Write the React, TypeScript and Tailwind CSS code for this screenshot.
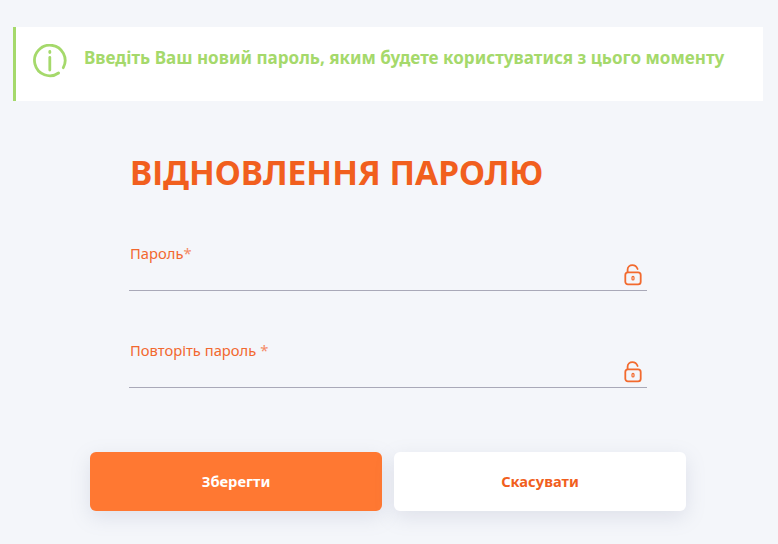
function Lock() {
  return (
    <svg width="18" height="22" viewBox="0 0 18 22" fill="none" stroke="#f26a2e" strokeWidth="1.8" className="absolute right-[5px] bottom-[4px]">
      <rect x="1.3" y="8.3" width="15.4" height="12" rx="2.6" />
      <path d="M3.6 8 V5.8 C3.6 3 5.8 1.2 8.4 1.2 C11 1.2 12.6 2.6 13.6 5" strokeLinecap="round" />
      <rect x="8" y="12.4" width="2" height="3.6" rx="1" strokeWidth="1.2" />
    </svg>
  );
}

function Field({ label, star }: { label: string; star: string }) {
  return (
    <div className="relative w-[518px] h-[48px] border-b border-[#a9a9b8]">
      <div className="pl-px text-[14.75px] leading-[20px] text-[#f2682f]">
        {label}
        <span className="text-[#f58a66]">{star}</span>
      </div>
      <Lock />
    </div>
  );
}

export default function App() {
  return (
    <div className="w-[778px] h-[544px] overflow-hidden bg-[#f4f6fa] pt-[27px] font-['Noto_Sans','Open_Sans',sans-serif]">
      <div className="ml-[13px] flex h-[74px] w-[750px] items-start border-l-[3px] border-[#a5d96b] bg-white pl-[17px]">
        <svg width="34" height="34" viewBox="0 0 34 34" fill="none" stroke="#a5d96b" strokeWidth="2.8" strokeLinecap="round" className="mt-[17px]">
          <path d="M25.6 29 A15.3 15.3 0 1 1 30.3 23.7" />
          <path d="M16.8 13.5 V26" />
          <path d="M16.8 7.5 V8.5" />
        </svg>
        <div className="mt-[19px] ml-[17px] text-[17.1px] leading-[24px] font-bold text-[#a5d96b] whitespace-nowrap">
          Введіть Ваш новий пароль, яким будете користуватися з цього моменту
        </div>
      </div>
      <div className="ml-[129px] mt-[49px] pl-px text-[33.5px] leading-[44px] font-bold text-[#f15f1e] whitespace-nowrap">
        ВІДНОВЛЕННЯ ПАРОЛЮ
      </div>
      <div className="ml-[129px] mt-[49px] flex flex-col gap-[49px]">
        <Field label="Пароль" star="*" />
        <Field label="Повторіть пароль " star="*" />
      </div>
      <div className="ml-[90px] mt-[64px] flex gap-[12px]">
        <button className="flex h-[59px] w-[292px] items-center justify-center rounded-[6px] bg-[#ff7832] text-[14.7px] font-bold text-white shadow-[0_6px_20px_rgba(120,130,160,0.18)]">
          Зберегти
        </button>
        <button className="flex h-[59px] w-[292px] items-center justify-center rounded-[6px] bg-white text-[14.7px] font-bold text-[#f15f1e] shadow-[0_6px_20px_rgba(120,130,160,0.18)]">
          Скасувати
        </button>
      </div>
    </div>
  );
}
